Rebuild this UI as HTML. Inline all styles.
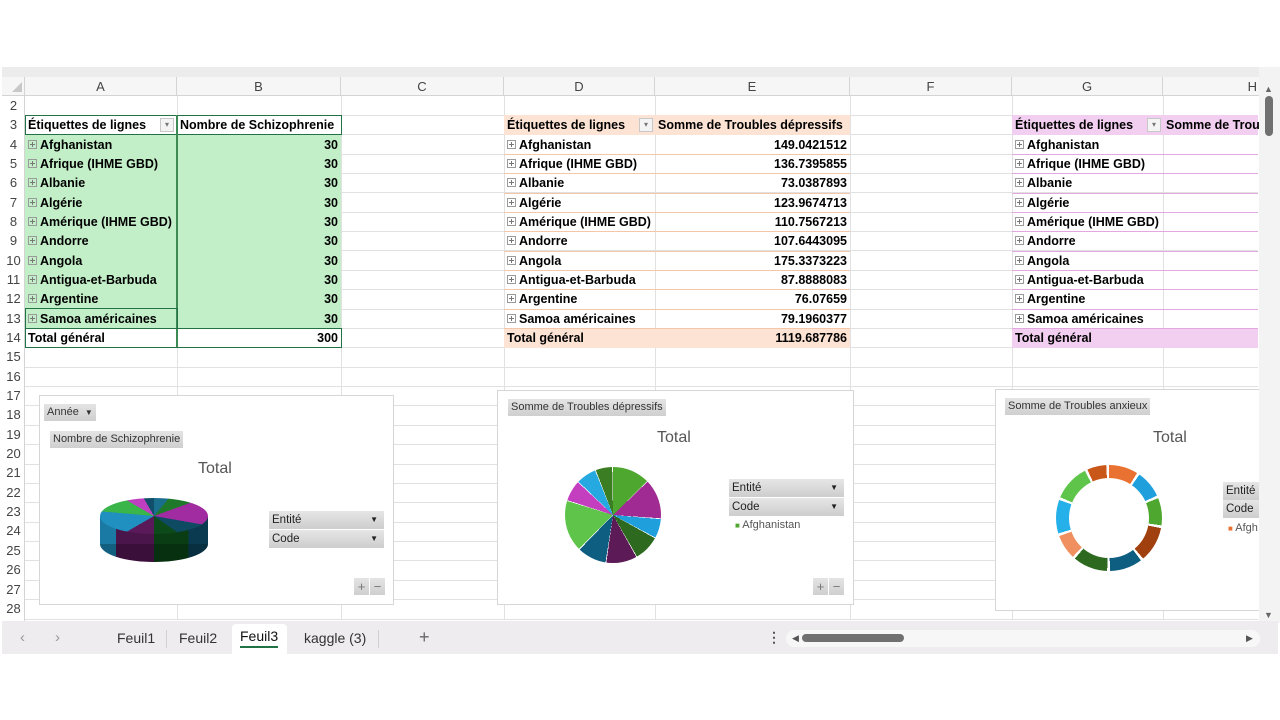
<!DOCTYPE html>
<html><head><meta charset="utf-8"><style>
*{margin:0;padding:0;box-sizing:border-box}
body{width:1280px;height:720px;background:#fff;position:relative;overflow:hidden;font-family:"Liberation Sans",Arial,sans-serif}
.a{position:absolute}
.ch{position:absolute;top:77px;height:19px;line-height:19px;text-align:center;font-size:13px;color:#444;border-right:1px solid #d4d4d4}
.rn{position:absolute;left:2px;width:23px;height:19px;line-height:20px;text-align:center;font-size:13px;color:#444}
.vl{position:absolute;top:96px;height:523px;width:1px;background:#e1e1e1}
.hl{position:absolute;left:25px;width:1233px;height:1px;background:#e1e1e1}
.c{position:absolute;height:19px;line-height:20px;font-size:12.5px;font-weight:bold;color:#000;white-space:nowrap;overflow:hidden;padding:0 3px}
.n{text-align:right}
.pl{display:inline-block;width:9px;height:9px;border:1px solid #9a9a9a;position:relative;margin-right:3px;top:0px}
.pl:before{content:"";position:absolute;left:1px;top:3px;width:5px;height:1px;background:#777}
.pl:after{content:"";position:absolute;left:3px;top:1px;width:1px;height:5px;background:#777}
.dd{position:absolute;width:14px;height:14px;border:1px solid #c8c8c8;background:#f4f4f4;font-size:8px;line-height:12px;text-align:center;color:#777}
.chart{position:absolute;background:#fff;border:1px solid #d6d6d6}
.btn{position:absolute;background:linear-gradient(#e4e4e4,#cfcfcf);font-size:11px;color:#333;height:17px;line-height:17px;padding:0 3px;white-space:nowrap}
.fb{position:absolute;background:linear-gradient(#e6e6e6,#cdcdcd);font-size:11.5px;color:#222;height:18px;line-height:18px;padding:0 3px}
.fb span{position:absolute;right:6px;font-size:8px}
.tt{position:absolute;font-size:16px;color:#555}
.tab{position:absolute;top:630px;font-size:14px;color:#333}
</style></head><body>
<div class="a" style="left:2px;top:67px;width:1276px;height:10px;background:#ececec"></div>
<div class="a" style="left:2px;top:77px;width:1258px;height:19px;background:#f6f6f6;border-bottom:1px solid #d4d4d4"></div>
<div class="a" style="left:2px;top:77px;width:23px;height:19px;border-right:1px solid #d4d4d4"></div>
<div class="a" style="left:12px;top:82px;width:0;height:0;border-left:10px solid transparent;border-bottom:10px solid #c8c8c8"></div>
<div class="ch" style="left:25px;width:152px">A</div>
<div class="ch" style="left:177px;width:164px">B</div>
<div class="ch" style="left:341px;width:163px">C</div>
<div class="ch" style="left:504px;width:151px">D</div>
<div class="ch" style="left:655px;width:195px">E</div>
<div class="ch" style="left:850px;width:162px">F</div>
<div class="ch" style="left:1012px;width:151px">G</div>
<div class="ch" style="left:1163px;width:97px;text-align:right;padding-right:3px;border-right:none">H</div>
<div class="a" style="left:24px;top:96px;width:1px;height:525px;background:#d4d4d4"></div>
<div class="vl" style="left:177px"></div><div class="vl" style="left:341px"></div><div class="vl" style="left:504px"></div><div class="vl" style="left:655px"></div><div class="vl" style="left:850px"></div><div class="vl" style="left:1012px"></div><div class="vl" style="left:1163px"></div>
<div class="hl" style="top:115px"></div><div class="hl" style="top:134px"></div><div class="hl" style="top:154px"></div><div class="hl" style="top:173px"></div><div class="hl" style="top:192px"></div><div class="hl" style="top:212px"></div><div class="hl" style="top:231px"></div><div class="hl" style="top:250px"></div><div class="hl" style="top:270px"></div><div class="hl" style="top:289px"></div><div class="hl" style="top:309px"></div><div class="hl" style="top:328px"></div><div class="hl" style="top:347px"></div><div class="hl" style="top:367px"></div><div class="hl" style="top:386px"></div><div class="hl" style="top:405px"></div><div class="hl" style="top:425px"></div><div class="hl" style="top:444px"></div><div class="hl" style="top:464px"></div><div class="hl" style="top:483px"></div><div class="hl" style="top:502px"></div><div class="hl" style="top:522px"></div><div class="hl" style="top:541px"></div><div class="hl" style="top:560px"></div><div class="hl" style="top:580px"></div><div class="hl" style="top:599px"></div><div class="hl" style="top:619px"></div>
<div class="rn" style="top:96px">2</div><div class="rn" style="top:115px">3</div><div class="rn" style="top:135px">4</div><div class="rn" style="top:154px">5</div><div class="rn" style="top:173px">6</div><div class="rn" style="top:193px">7</div><div class="rn" style="top:212px">8</div><div class="rn" style="top:231px">9</div><div class="rn" style="top:251px">10</div><div class="rn" style="top:270px">11</div><div class="rn" style="top:289px">12</div><div class="rn" style="top:309px">13</div><div class="rn" style="top:328px">14</div><div class="rn" style="top:347px">15</div><div class="rn" style="top:367px">16</div><div class="rn" style="top:386px">17</div><div class="rn" style="top:405px">18</div><div class="rn" style="top:425px">19</div><div class="rn" style="top:444px">20</div><div class="rn" style="top:463px">21</div><div class="rn" style="top:483px">22</div><div class="rn" style="top:502px">23</div><div class="rn" style="top:521px">24</div><div class="rn" style="top:541px">25</div><div class="rn" style="top:560px">26</div><div class="rn" style="top:580px">27</div><div class="rn" style="top:599px">28</div>

<div class="a" style="left:25px;top:135px;width:316px;height:193px;background:#c3efc8"></div>
<div class="a" style="left:25px;top:115px;width:317px;height:20px;border:1px solid #217346"></div>
<div class="a" style="left:176px;top:115px;width:2px;height:233px;background:#3e8a55"></div>
<div class="a" style="left:25px;top:328px;width:317px;height:20px;border:1.5px solid #217346"></div>
<div class="a" style="left:25px;top:308px;width:153px;height:21px;border:1.5px solid #217346"></div>
<div class="c" style="left:25px;top:115px;width:140px">Étiquettes de lignes</div>
<div class="dd" style="left:160px;top:118px">▾</div>
<div class="c" style="left:177px;top:115px;width:164px">Nombre de Schizophrenie</div>

<div class="a" style="left:504px;top:115px;width:346px;height:20px;background:#fce3d4"></div>
<div class="a" style="left:504px;top:328px;width:346px;height:20px;background:#fce3d4"></div>
<div class="a" style="left:504px;top:154px;width:346px;height:1px;background:#f5c7a9;box-shadow:0 19px 0 #f5c7a9,0 39px 0 #f5c7a9,0 58px 0 #f5c7a9,0 77px 0 #f5c7a9,0 97px 0 #f5c7a9,0 116px 0 #f5c7a9,0 135px 0 #f5c7a9,0 155px 0 #f5c7a9,0 174px 0 #f5c7a9"></div>
<div class="c" style="left:504px;top:115px;width:140px">Étiquettes de lignes</div>
<div class="dd" style="left:639px;top:118px">▾</div>
<div class="c" style="left:655px;top:115px;width:195px">Somme de Troubles dépressifs</div>

<div class="a" style="left:1012px;top:115px;width:246px;height:20px;background:#f2cff0"></div>
<div class="a" style="left:1012px;top:328px;width:246px;height:20px;background:#f2cff0"></div>
<div class="a" style="left:1012px;top:154px;width:246px;height:1px;background:#e4a8e0;box-shadow:0 19px 0 #e4a8e0,0 39px 0 #e4a8e0,0 58px 0 #e4a8e0,0 77px 0 #e4a8e0,0 97px 0 #e4a8e0,0 116px 0 #e4a8e0,0 135px 0 #e4a8e0,0 155px 0 #e4a8e0,0 174px 0 #e4a8e0"></div>
<div class="c" style="left:1012px;top:115px;width:140px">Étiquettes de lignes</div>
<div class="dd" style="left:1147px;top:118px">▾</div>
<div class="c" style="left:1163px;top:115px;width:97px">Somme de Troubles anxieux</div>

<div class="c" style="left:25px;top:135px"><span class="pl"></span>Afghanistan</div><div class="c n" style="left:177px;top:135px;width:164px">30</div><div class="c" style="left:504px;top:135px"><span class="pl"></span>Afghanistan</div><div class="c n" style="left:655px;top:135px;width:195px">149.0421512</div><div class="c" style="left:1012px;top:135px"><span class="pl"></span>Afghanistan</div>
<div class="c" style="left:25px;top:154px"><span class="pl"></span>Afrique (IHME GBD)</div><div class="c n" style="left:177px;top:154px;width:164px">30</div><div class="c" style="left:504px;top:154px"><span class="pl"></span>Afrique (IHME GBD)</div><div class="c n" style="left:655px;top:154px;width:195px">136.7395855</div><div class="c" style="left:1012px;top:154px"><span class="pl"></span>Afrique (IHME GBD)</div>
<div class="c" style="left:25px;top:173px"><span class="pl"></span>Albanie</div><div class="c n" style="left:177px;top:173px;width:164px">30</div><div class="c" style="left:504px;top:173px"><span class="pl"></span>Albanie</div><div class="c n" style="left:655px;top:173px;width:195px">73.0387893</div><div class="c" style="left:1012px;top:173px"><span class="pl"></span>Albanie</div>
<div class="c" style="left:25px;top:193px"><span class="pl"></span>Algérie</div><div class="c n" style="left:177px;top:193px;width:164px">30</div><div class="c" style="left:504px;top:193px"><span class="pl"></span>Algérie</div><div class="c n" style="left:655px;top:193px;width:195px">123.9674713</div><div class="c" style="left:1012px;top:193px"><span class="pl"></span>Algérie</div>
<div class="c" style="left:25px;top:212px"><span class="pl"></span>Amérique (IHME GBD)</div><div class="c n" style="left:177px;top:212px;width:164px">30</div><div class="c" style="left:504px;top:212px"><span class="pl"></span>Amérique (IHME GBD)</div><div class="c n" style="left:655px;top:212px;width:195px">110.7567213</div><div class="c" style="left:1012px;top:212px"><span class="pl"></span>Amérique (IHME GBD)</div>
<div class="c" style="left:25px;top:231px"><span class="pl"></span>Andorre</div><div class="c n" style="left:177px;top:231px;width:164px">30</div><div class="c" style="left:504px;top:231px"><span class="pl"></span>Andorre</div><div class="c n" style="left:655px;top:231px;width:195px">107.6443095</div><div class="c" style="left:1012px;top:231px"><span class="pl"></span>Andorre</div>
<div class="c" style="left:25px;top:251px"><span class="pl"></span>Angola</div><div class="c n" style="left:177px;top:251px;width:164px">30</div><div class="c" style="left:504px;top:251px"><span class="pl"></span>Angola</div><div class="c n" style="left:655px;top:251px;width:195px">175.3373223</div><div class="c" style="left:1012px;top:251px"><span class="pl"></span>Angola</div>
<div class="c" style="left:25px;top:270px"><span class="pl"></span>Antigua-et-Barbuda</div><div class="c n" style="left:177px;top:270px;width:164px">30</div><div class="c" style="left:504px;top:270px"><span class="pl"></span>Antigua-et-Barbuda</div><div class="c n" style="left:655px;top:270px;width:195px">87.8888083</div><div class="c" style="left:1012px;top:270px"><span class="pl"></span>Antigua-et-Barbuda</div>
<div class="c" style="left:25px;top:289px"><span class="pl"></span>Argentine</div><div class="c n" style="left:177px;top:289px;width:164px">30</div><div class="c" style="left:504px;top:289px"><span class="pl"></span>Argentine</div><div class="c n" style="left:655px;top:289px;width:195px">76.07659</div><div class="c" style="left:1012px;top:289px"><span class="pl"></span>Argentine</div>
<div class="c" style="left:25px;top:309px"><span class="pl"></span>Samoa américaines</div><div class="c n" style="left:177px;top:309px;width:164px">30</div><div class="c" style="left:504px;top:309px"><span class="pl"></span>Samoa américaines</div><div class="c n" style="left:655px;top:309px;width:195px">79.1960377</div><div class="c" style="left:1012px;top:309px"><span class="pl"></span>Samoa américaines</div>
<div class="c" style="left:25px;top:328px">Total général</div><div class="c n" style="left:177px;top:328px;width:164px">300</div><div class="c" style="left:504px;top:328px">Total général</div><div class="c n" style="left:655px;top:328px;width:195px">1119.687786</div><div class="c" style="left:1012px;top:328px">Total général</div>

<!-- chart 1 -->
<div class="chart" style="left:39px;top:395px;width:355px;height:210px"></div>
<div class="btn" style="left:44px;top:404px">Année &nbsp;<span style="font-size:8px">▼</span></div>
<div class="btn" style="left:50px;top:431px">Nombre de Schizophrenie</div>
<div class="tt" style="left:198px;top:460px">Total</div>
<div class="a" style="left:100px;top:526px;width:108px;height:36px;border-radius:50%;background:linear-gradient(90deg,#125f80 0,#125f80 15%,#3a0f3a 15%,#3a0f3a 50%,#06300f 50%,#06300f 82%,#082f40 82%)"></div>
<div class="a" style="left:100px;top:516px;width:108px;height:28px;background:linear-gradient(90deg,#1a7aa3 0,#1a7aa3 15%,#4a154a 15%,#4a154a 50%,#0a3d14 50%,#0a3d14 82%,#0a3a50 82%)"></div>
<div class="a" style="left:100px;top:498px;width:108px;height:36px;border-radius:50%;background:conic-gradient(#1a6f8f 0 40deg,#1e7a2a 40deg 70deg,#a12ba0 70deg 100deg,#0f4a63 100deg 125deg,#0c4a1a 125deg 180deg,#5a1a5a 180deg 240deg,#2090c0 240deg 275deg,#39b54a 275deg 300deg,#c03fc0 300deg 330deg,#104e6a 330deg)"></div>
<div class="fb" style="left:269px;top:511px;width:115px">Entité<span>▼</span></div>
<div class="fb" style="left:269px;top:530px;width:115px">Code<span>▼</span></div>
<div class="btn" style="left:354px;top:578px;width:15px;text-align:center;font-size:13px;color:#777">+</div>
<div class="btn" style="left:370px;top:578px;width:15px;text-align:center;font-size:13px;color:#777">−</div>

<!-- chart 2 -->
<div class="chart" style="left:497px;top:390px;width:357px;height:215px"></div>
<div class="btn" style="left:508px;top:399px">Somme de Troubles dépressifs</div>
<div class="tt" style="left:657px;top:429px">Total</div>
<div class="a" style="left:565px;top:467px;width:96px;height:96px;border-radius:50%;background:conic-gradient(#4ea72e 0 45deg,#fff 45deg 46deg,#a02b93 46deg 94deg,#fff 94deg 95deg,#1fa0dd 95deg 118deg,#fff 118deg 119deg,#2d6a1f 119deg 150deg,#fff 150deg 151deg,#5c1a56 151deg 188deg,#fff 188deg 189deg,#0e5e82 189deg 224deg,#fff 224deg 225deg,#5ec44a 225deg 287deg,#fff 287deg 288deg,#c43fc0 288deg 313deg,#fff 313deg 314deg,#26a9e0 314deg 338deg,#fff 338deg 339deg,#3b7d23 339deg 359deg,#fff 359deg)"></div>
<div class="fb" style="left:729px;top:479px;width:115px">Entité<span>▼</span></div>
<div class="fb" style="left:729px;top:498px;width:115px">Code<span>▼</span></div>
<div class="a" style="left:735px;top:519px;font-size:11px;color:#555"><span style="color:#4ea72e;font-size:8px">■</span> Afghanistan</div>
<div class="btn" style="left:813px;top:578px;width:15px;text-align:center;font-size:13px;color:#777">+</div>
<div class="btn" style="left:829px;top:578px;width:15px;text-align:center;font-size:13px;color:#777">−</div>

<!-- chart 3 -->
<div class="chart" style="left:995px;top:389px;width:270px;height:222px"></div>
<div class="btn" style="left:1005px;top:398px">Somme de Troubles anxieux</div>
<div class="tt" style="left:1153px;top:429px">Total</div>
<div class="a" style="left:1056px;top:465px;width:106px;height:106px;border-radius:50%;background:conic-gradient(#e97132 0 32deg,#fff 32deg 35deg,#1fa0dd 35deg 65deg,#fff 65deg 68deg,#4ea72e 68deg 98deg,#fff 98deg 101deg,#a0400f 101deg 140deg,#fff 140deg 143deg,#0e5e82 143deg 179deg,#fff 179deg 182deg,#2d6a1f 182deg 220deg,#fff 220deg 223deg,#f09060 223deg 250deg,#fff 250deg 253deg,#26b0ea 253deg 290deg,#fff 290deg 293deg,#5ec44a 293deg 333deg,#fff 333deg 336deg,#c9571a 336deg 357deg,#fff 357deg)"></div>
<div class="a" style="left:1069px;top:478px;width:80px;height:80px;border-radius:50%;background:#fff"></div>
<div class="fb" style="left:1223px;top:482px;width:40px">Entité</div>
<div class="fb" style="left:1223px;top:500px;width:40px">Code</div>
<div class="a" style="left:1228px;top:522px;font-size:11px;color:#555;white-space:nowrap"><span style="color:#e97132;font-size:8px">■</span> Afgh</div>

<div class="a" style="left:1259px;top:67px;width:21px;height:556px;background:#f3f3f3"></div>
<div class="a" style="left:1264px;top:84px;font-size:9px;color:#666">▲</div>
<div class="a" style="left:1265px;top:96px;width:8px;height:40px;border-radius:4px;background:#707070"></div>
<div class="a" style="left:1264px;top:610px;font-size:9px;color:#666">▼</div>

<div class="a" style="left:2px;top:621px;width:1276px;height:33px;background:#eeecee"></div>
<div class="a" style="left:20px;top:629px;font-size:15px;color:#999">‹</div>
<div class="a" style="left:55px;top:629px;font-size:15px;color:#999">›</div>
<div class="a" style="left:232px;top:624px;width:55px;height:30px;background:#fff;border-radius:4px 4px 0 0"></div>
<div class="tab" style="left:117px">Feuil1</div>
<div class="a" style="left:166px;top:630px;width:1px;height:18px;background:#d0d0d0"></div>
<div class="tab" style="left:179px">Feuil2</div>
<div class="tab" style="left:240px;top:628px;color:#111">Feuil3</div>
<div class="a" style="left:240px;top:646px;width:38px;height:2px;background:#217346"></div>
<div class="tab" style="left:304px">kaggle (3)</div>
<div class="a" style="left:378px;top:630px;width:1px;height:18px;background:#d0d0d0"></div>
<div class="a" style="left:419px;top:627px;font-size:18px;color:#666">+</div>
<div class="a" style="left:767px;top:629px;font-size:14px;color:#555;font-weight:bold">⋮</div>
<div class="a" style="left:786px;top:630px;width:474px;height:17px;border-radius:8px;background:#f7f7f7"></div>
<div class="a" style="left:792px;top:633px;font-size:9px;color:#555">◀</div>
<div class="a" style="left:802px;top:634px;width:102px;height:8px;border-radius:4px;background:#707070"></div>
<div class="a" style="left:1246px;top:633px;font-size:9px;color:#555">▶</div>
</body></html>
